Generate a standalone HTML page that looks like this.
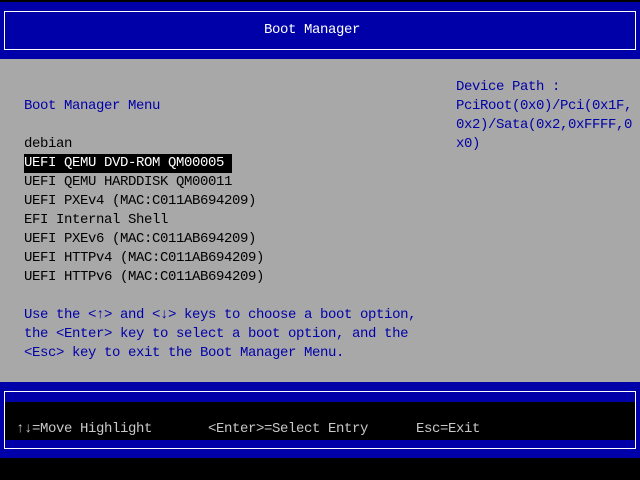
<!DOCTYPE html>
<html><head><meta charset="utf-8"><style>
*{margin:0;padding:0;box-sizing:border-box}
body{width:640px;height:480px;background:#000;position:relative;overflow:hidden;font-family:"Liberation Mono","DejaVu Sans Mono",monospace;font-size:14px;letter-spacing:-0.4px}
.a{position:absolute;white-space:pre;line-height:19px;height:19px}
.b{color:#0000a8}
.k{color:#000}
.w{color:#fff}
.g{color:#c8c8c8}
</style></head><body>
<div style="position:absolute;left:0;top:2px;width:640px;height:57px;background:#0000a8"></div>
<div style="position:absolute;left:4px;top:11px;width:632px;height:39px;border:1px solid #fff"></div>
<div class="a w" style="left:264px;top:21px">Boot Manager</div>
<div style="position:absolute;left:0;top:59px;width:640px;height:323px;background:#a8a8a8"></div>
<div class="a b" style="left:24px;top:97px">Boot Manager Menu</div>
<div class="a k" style="left:24px;top:135px">debian</div>
<div class="a w" style="left:24px;top:154px;background:#000;width:208px">UEFI QEMU DVD-ROM QM00005</div>
<div class="a k" style="left:24px;top:173px">UEFI QEMU HARDDISK QM00011</div>
<div class="a k" style="left:24px;top:192px">UEFI PXEv4 (MAC:C011AB694209)</div>
<div class="a k" style="left:24px;top:211px">EFI Internal Shell</div>
<div class="a k" style="left:24px;top:230px">UEFI PXEv6 (MAC:C011AB694209)</div>
<div class="a k" style="left:24px;top:249px">UEFI HTTPv4 (MAC:C011AB694209)</div>
<div class="a k" style="left:24px;top:268px">UEFI HTTPv6 (MAC:C011AB694209)</div>
<div class="a b" style="left:24px;top:306px">Use the &lt;↑&gt; and &lt;↓&gt; keys to choose a boot option,</div>
<div class="a b" style="left:24px;top:325px">the &lt;Enter&gt; key to select a boot option, and the</div>
<div class="a b" style="left:24px;top:344px">&lt;Esc&gt; key to exit the Boot Manager Menu.</div>
<div class="a b" style="left:456px;top:78px">Device Path :</div>
<div class="a b" style="left:456px;top:97px">PciRoot(0x0)/Pci(0x1F,</div>
<div class="a b" style="left:456px;top:116px">0x2)/Sata(0x2,0xFFFF,0</div>
<div class="a b" style="left:456px;top:135px">x0)</div>
<div style="position:absolute;left:0;top:382px;width:640px;height:76px;background:#0000a8"></div>
<div style="position:absolute;left:4px;top:391px;width:632px;height:58px;border:1px solid #fff"></div>
<div style="position:absolute;left:5px;top:402px;width:630px;height:38px;background:#000"></div>
<div class="a g" style="left:16px;top:420px">↑↓=Move Highlight</div>
<div class="a g" style="left:208px;top:420px">&lt;Enter&gt;=Select Entry</div>
<div class="a g" style="left:416px;top:420px">Esc=Exit</div>
</body></html>
